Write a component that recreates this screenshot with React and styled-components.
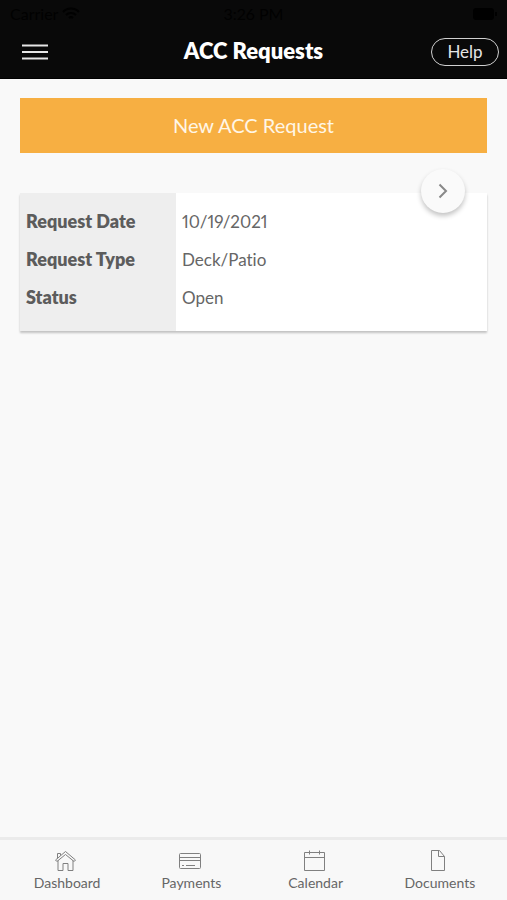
import React from 'react';
import styled, { createGlobalStyle } from 'styled-components';

const GlobalStyle = createGlobalStyle`
  * {
    box-sizing: border-box;
  }

  body {
    margin: 0;
    background: #f9f9f9;
    color: #666;
    font-family: Lato, 'Open Sans', sans-serif;
    font-variant-ligatures: none;
    font-variant-numeric: proportional-nums;
  }

  button {
    font-family: inherit;
    cursor: pointer;
  }
`;

const Screen = styled.div`
  display: flex;
  flex-direction: column;
  min-height: 100vh;
`;

const Header = styled.header`
  background: #090909;
  border-bottom: 1px solid #000;
`;

const StatusBar = styled.div`
  display: grid;
  grid-template-columns: 1fr auto 1fr;
  align-items: center;
  height: 26px;
  padding: 2px 10px 0;
  color: #010101;
  font-size: 16px;
  line-height: 20px;
`;

const Carrier = styled.div`
  display: flex;
  align-items: center;
  gap: 4px;
`;

const Battery = styled.svg`
  justify-self: end;
`;

const TitleBar = styled.div`
  display: grid;
  grid-template-columns: 1fr auto 1fr;
  align-items: center;
  height: 52px;
  padding: 0 8px 0 22px;
`;

const MenuButton = styled.button`
  display: flex;
  width: 26px;
  padding: 0;
  border: 0;
  background: none;
  color: #e6e6e6;
`;

const Title = styled.h1`
  margin: 0 14px 2px 0;
  color: #fff;
  font-size: 22px;
  font-weight: 800;
  line-height: 24px;
`;

const HelpButton = styled.button`
  justify-self: end;
  width: 68px;
  height: 28px;
  padding: 0;
  border: 1px solid #d0d0d0;
  border-radius: 14px;
  background: none;
  color: #e6e6e6;
  font-size: 17px;
  line-height: 24px;
`;

const Content = styled.main`
  flex: 1;
  padding: 19px 20px;
`;

const NewRequestButton = styled.button`
  display: block;
  width: 100%;
  height: 55px;
  padding: 0 0 2px;
  border: 0;
  background: #f7af42;
  color: #fff6e6;
  font-size: 20px;
  line-height: 24px;
`;

const RequestCard = styled.section`
  position: relative;
  margin-top: 40px;
  padding: 10px 0 14px;
  background: linear-gradient(#eee, #eee) left / 156px 100% no-repeat #fff;
  box-shadow: 0 2px 2px rgba(0, 0, 0, 0.22);
`;

const Details = styled.table`
  width: 100%;
  border-spacing: 0;
  table-layout: fixed;
  font-size: 17px;
  line-height: 20px;
`;

const Label = styled.th`
  width: 156px;
  height: 38px;
  padding: 0 6px 2px;
  color: #5c5c5c;
  font-size: 18px;
  font-weight: 800;
  text-align: left;
`;

const Value = styled.td`
  padding: 0 6px;
`;

const OpenButton = styled.button`
  position: absolute;
  top: -24px;
  right: 22px;
  display: flex;
  align-items: center;
  justify-content: center;
  width: 44px;
  height: 44px;
  padding: 0;
  border: 0;
  border-radius: 50%;
  background: #fafafa;
  box-shadow: 0 3px 5px rgba(0, 0, 0, 0.24);
  color: #888;
`;

const TabBar = styled.nav`
  display: grid;
  grid-template-columns: repeat(4, 1fr);
  padding: 9px 5px;
  border-top: 3px solid #ebebeb;
  background: #f8f8f8;
`;

const Tab = styled.a`
  display: flex;
  flex-direction: column;
  align-items: center;
  gap: 2px;
  color: #666;
  font-size: 14px;
  line-height: 16px;
  text-decoration: none;
`;

const TabIcon = styled.svg`
  width: 28px;
  height: 24px;
  fill: none;
  stroke: #808080;
  stroke-width: 1;
`;

const tabs = [
  {
    name: 'Dashboard',
    icon: (
      <path d="M2.5 11 12.5 2.5l10 8.5-1.5 1.500-1-1v10h-5v-7h-5v7h-5v-10l-1 1zM4.500 9.500V4.500h3v2M4.500 12l8-6.500 8 6.500" />
    ),
  },
  {
    name: 'Payments',
    icon: (
      <>
        <rect x="2.5" y="4.5" width="21" height="15" rx="1" />
        <path d="M2.5 8.5h21M2.5 11.5h21M5 16.5h2M9 16.5h9" />
      </>
    ),
  },
  {
    name: 'Calendar',
    icon: (
      <path d="M2.5 3.5h20v18h-20zM2.5 8.5h20M7.5 1.5v4M17.5 1.5v4" />
    ),
  },
  {
    name: 'Documents',
    icon: <path d="M5.5 1.5h8l5 6v14h-13zM12.5 1.5v6h6" />,
  },
];

const details = [
  { label: 'Request Date', value: '10/19/2021' },
  { label: 'Request Type', value: 'Deck/Patio' },
  { label: 'Status', value: 'Open' },
];

const App = () => {
  return (
    <Screen>
      <GlobalStyle />
      <Header>
        <StatusBar>
          <Carrier>
            Carrier
            <svg width="18" height="14" viewBox="0 0 18 14" fill="none" stroke="currentColor" strokeWidth="2">
              <path d="M1 5a11 11 0 0 1 16 0M4 8a7 7 0 0 1 10 0M7 11a3 3 0 0 1 4 0" />
            </svg>
          </Carrier>
          <span>3:26 PM</span>
          <Battery width="24" height="12" viewBox="0 0 24 12">
            <rect width="21" height="12" rx="3" />
            <rect x="22" y="4" width="2" height="4" />
          </Battery>
        </StatusBar>
        <TitleBar>
          <MenuButton aria-label="Menu">
            <svg width="26" height="18" viewBox="0 0 26 18" stroke="currentColor" strokeWidth="2">
              <path d="M0 2.5h26M0 9h26M0 15.5h26" />
            </svg>
          </MenuButton>
          <Title>ACC Requests</Title>
          <HelpButton>Help</HelpButton>
        </TitleBar>
      </Header>

      <Content>
        <NewRequestButton>New ACC Request</NewRequestButton>
        <RequestCard>
          <Details>
            <tbody>
              {details.map((row) => (
                <tr key={row.label}>
                  <Label scope="row">{row.label}</Label>
                  <Value>{row.value}</Value>
                </tr>
              ))}
            </tbody>
          </Details>
          <OpenButton aria-label="Open request">
            <svg width="10" height="16" viewBox="0 0 10 16" fill="none" stroke="currentColor" strokeWidth="2">
              <path d="m1.5 1.5 6.5 6.5-6.5 6.5" />
            </svg>
          </OpenButton>
        </RequestCard>
      </Content>

      <TabBar>
        {tabs.map((tab) => (
          <Tab key={tab.name} href={`#${tab.name.toLowerCase()}`}>
            <TabIcon viewBox="0 0 28 24">{tab.icon}</TabIcon>
            {tab.name}
          </Tab>
        ))}
      </TabBar>
    </Screen>
  );
};

export default App;
